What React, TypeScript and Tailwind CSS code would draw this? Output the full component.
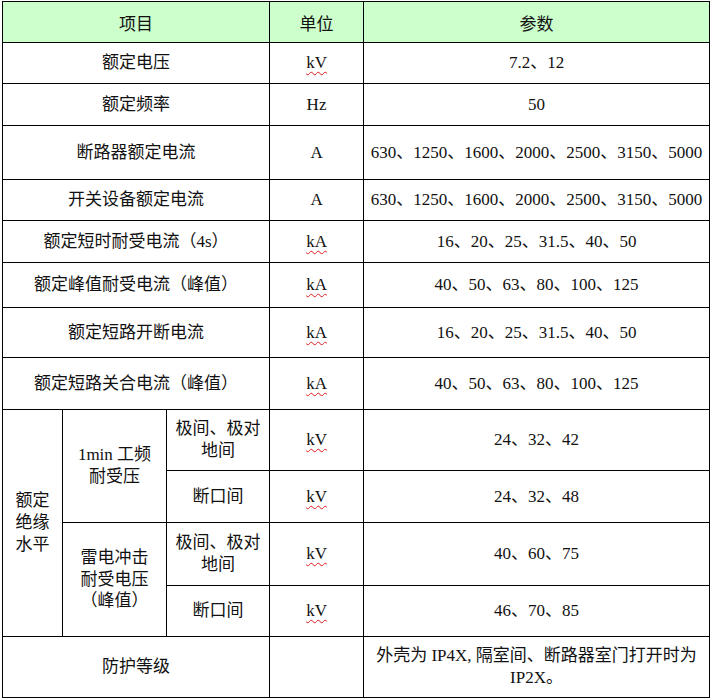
import React from 'react';

type Row = {
  name: string;
  unit: string;
  value: string;
  h: string;
  dashed?: boolean;
};

// 上半部分的普通行
const rows: Row[] = [
  { name: '额定电压', unit: 'kV', value: '7.2、12', h: 'h-[41px]' },
  { name: '额定频率', unit: 'Hz', value: '50', h: 'h-[42px]' },
  { name: '断路器额定电流', unit: 'A', value: '630、1250、1600、2000、2500、3150、5000', h: 'h-[54px]' },
  { name: '开关设备额定电流', unit: 'A', value: '630、1250、1600、2000、2500、3150、5000', h: 'h-[41px]' },
  { name: '额定短时耐受电流（4s）', unit: 'kA', value: '16、20、25、31.5、40、50', h: 'h-[42px]', dashed: true },
  { name: '额定峰值耐受电流（峰值）', unit: 'kA', value: '40、50、63、80、100、125', h: 'h-[45px]' },
  { name: '额定短路开断电流', unit: 'kA', value: '16、20、25、31.5、40、50', h: 'h-[50px]' },
  { name: '额定短路关合电流（峰值）', unit: 'kA', value: '40、50、63、80、100、125', h: 'h-[52px]' },
];

const cell = 'border border-black text-center align-middle p-0';
const dash = 'border-t-[#c4c4c4] [border-top-style:dashed]';

const Unit = ({ u }: { u: string }) =>
  u === 'kV' || u === 'kA' ? (
    <span className="underline decoration-wavy decoration-[#e01b1b] decoration-1 underline-offset-[3px]">{u}</span>
  ) : (
    <span>{u}</span>
  );

export default function App() {
  return (
    <div className="bg-white w-[712px] h-[700px] pt-[1px] pl-[2px] text-[#111] text-[17px] leading-[21.7px] font-[family-name:'Liberation_Serif','Noto_Sans_CJK_SC',serif]">
      <table className="border-collapse table-fixed w-[707px]">
        <colgroup>
          <col className="w-[60px]" />
          <col className="w-[104px]" />
          <col className="w-[103px]" />
          <col className="w-[94px]" />
          <col className="w-[346px]" />
        </colgroup>
        <tbody>
          <tr className="h-[41px] bg-[#ccffcc]">
            <td colSpan={3} className={`${cell} pt-[6px]`}>项目</td>
            <td className={`${cell} pt-[6px]`}>单位</td>
            <td className={`${cell} pt-[6px]`}>参数</td>
          </tr>

          {rows.map((r) => (
            <tr key={r.name} className={r.h}>
              <td colSpan={3} className={`${cell} ${r.dashed ? dash : ''}`}>
                {r.name}
              </td>
              <td className={`${cell} ${r.dashed ? dash : ''}`}>
                <Unit u={r.unit} />
              </td>
              <td className={`${cell} ${r.dashed ? dash : ''}`}>{r.value}</td>
            </tr>
          ))}

          {/* 额定绝缘水平 */}
          <tr className="h-[61px]">
            <td rowSpan={4} className={cell}>
              额定<br />绝缘<br />水平
            </td>
            <td rowSpan={2} className={cell}>
              1min 工频<br />耐受压
            </td>
            <td className={cell}>
              极间、极对<br />地间
            </td>
            <td className={cell}><Unit u="kV" /></td>
            <td className={cell}>24、32、42</td>
          </tr>
          <tr className="h-[52px]">
            <td className={cell}>断口间</td>
            <td className={cell}><Unit u="kV" /></td>
            <td className={cell}>24、32、48</td>
          </tr>
          <tr className="h-[63px]">
            <td rowSpan={2} className={cell}>
              雷电冲击<br />耐受电压<br />（峰值）
            </td>
            <td className={cell}>
              极间、极对<br />地间
            </td>
            <td className={cell}><Unit u="kV" /></td>
            <td className={cell}>40、60、75</td>
          </tr>
          <tr className="h-[51px]">
            <td className={cell}>断口间</td>
            <td className={cell}><Unit u="kV" /></td>
            <td className={cell}>46、70、85</td>
          </tr>

          <tr className="h-[61px]">
            <td colSpan={3} className={cell}>防护等级</td>
            <td className={cell}></td>
            <td className={cell}>
              外壳为 IP4X, 隔室间、断路器室门打开时为<br />IP2X。
            </td>
          </tr>
        </tbody>
      </table>
    </div>
  );
}
